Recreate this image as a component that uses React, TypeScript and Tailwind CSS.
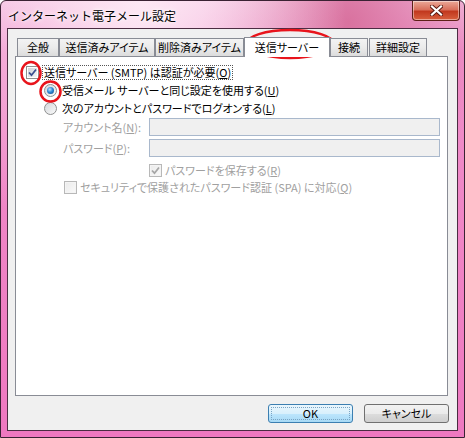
import React from 'react';

const font = "font-['Noto_Sans_CJK_JP','Noto_Sans',sans-serif]";

function Check({ checked, disabled }: { checked?: boolean; disabled?: boolean }) {
  return (
    <span
      className={`flex h-[13px] w-[13px] shrink-0 items-center justify-center border ${
        disabled ? 'border-[#b8b8b8] bg-[#f4f4f4]' : 'border-[#8e8f8f] bg-white'
      }`}
    >
      <span
        className={`flex h-[9px] w-[9px] items-center justify-center ${
          disabled
            ? 'bg-[linear-gradient(135deg,#ececec,#f8f8f8)]'
            : 'bg-[linear-gradient(135deg,#cfd3d8,#f4f5f7)]'
        }`}
      >
        {checked && (
          <svg width="9" height="9" viewBox="0 0 9 9">
            <path
              d="M1 4.5 L3.5 7.2 L8 1.5"
              fill="none"
              stroke={disabled ? '#a6a6a6' : '#3b4f8f'}
              strokeWidth="1.8"
            />
          </svg>
        )}
      </span>
    </span>
  );
}

function Radio({ checked }: { checked?: boolean }) {
  return (
    <span className="flex h-[13px] w-[13px] shrink-0 items-center justify-center rounded-full border border-[#8e8f8f] bg-[linear-gradient(135deg,#d4d7db,#fafafa)]">
      {checked && (
        <span className="h-[7px] w-[7px] rounded-full bg-[radial-gradient(circle_at_40%_35%,#bfe6ff_0%,#2f8ad6_45%,#0a3f7c_100%)]" />
      )}
    </span>
  );
}

const tabs = [
  { label: '全般', w: 'w-[42px]' },
  { label: '送信済みアイテム', w: 'w-[96px]' },
  { label: '削除済みアイテム', w: 'w-[89px]' },
  { label: '送信サーバー', w: 'w-[86px]', active: true },
  { label: '接続', w: 'w-[38px]' },
  { label: '詳細設定', w: 'w-[58px] ml-[1px]' },
];

export default function App() {
  return (
    <div
      className={`relative flex h-[438px] w-[465px] flex-col overflow-hidden rounded-t-[6px] border border-[#3a2233] bg-[radial-gradient(ellipse_at_30%_0%,#fde8f4_0%,transparent_45%),radial-gradient(ellipse_at_75%_5%,#d9729f_0%,transparent_30%),linear-gradient(180deg,#f4bde0_0%,#ef8fca_12%,#ee78c0_100%)] text-[11px] text-black ${font}`}
    >
      {/* title bar */}
      <div className="flex h-[27px] items-center pl-[7px] pt-[2px]">
        <span className="text-[12px] [text-shadow:0_0_6px_#fff,0_0_3px_#fff]">インターネット電子メール設定</span>
      </div>
      <button className="absolute right-[4px] top-0 flex h-[20px] w-[48px] items-center justify-center rounded-b-[4px] border border-t-0 border-[#5e2018] bg-[linear-gradient(180deg,#eba898_0%,#d9705c_45%,#c2391f_55%,#d8603e_100%)] shadow-[inset_0_0_0_1px_rgba(255,255,255,0.45)]">
        <svg width="13" height="11" viewBox="0 0 13 11">
          <path d="M2 1.5 L11 9.5 M11 1.5 L2 9.5" stroke="#5a1a12" strokeWidth="4" strokeLinecap="square" />
          <path d="M2 1.5 L11 9.5 M11 1.5 L2 9.5" stroke="#fff" strokeWidth="2.2" strokeLinecap="square" />
        </svg>
      </button>

      {/* client area */}
      <div className="mx-[6px] mb-[6px] flex flex-1 flex-col border border-[#4b2c42] bg-[#f0f0f0] pl-[7px] pr-[9px] pt-[8px] pb-[7px] [font-feature-settings:'palt']">
        <div className="relative z-10 flex h-[20px] items-end pl-[2px]">
          {tabs.map((t) =>
            t.active ? (
              <div
                key={t.label}
                className={`${t.w} flex h-[20px] items-start justify-center border border-b-0 border-[#898c95] bg-white pt-[1px]`}
              >
                {t.label}
              </div>
            ) : (
              <div
                key={t.label}
                className={`${t.w} mb-[1px] flex h-[18px] items-center justify-center border border-b-0 border-[#898c95] bg-[linear-gradient(180deg,#f3f3f3_0%,#ebebeb_50%,#dcdcdc_100%)]`}
              >
                {t.label}
              </div>
            )
          )}
        </div>

        <div className="-mt-px flex flex-1 flex-col border border-[#898c95] bg-white pl-[10px] pr-[7px] pt-[6px]">
          <div className="flex h-[18px] items-center gap-[3px]">
            <Check checked />
            <span className="border border-dotted border-[#555] px-px leading-[13px]">
              送信サーバー (SMTP) は認証が必要(<u>O</u>)
            </span>
          </div>
          <div className="flex h-[18px] items-center gap-[5px] pl-[18px]">
            <Radio checked />
            <span>
              受信メール サーバーと同じ設定を使用する(<u>U</u>)
            </span>
          </div>
          <div className="flex h-[18px] items-center gap-[5px] pl-[18px]">
            <Radio />
            <span>
              次のアカウントとパスワードでログオンする(<u>L</u>)
            </span>
          </div>

          <div className="mt-[1px] flex flex-col gap-[3px] pl-[37px] text-[#a0a0a0]">
            <div className="flex h-[18px] items-center">
              <span className="w-[86px]">
                アカウント名(<u>N</u>):
              </span>
              <div className="h-[18px] flex-1 border border-[#a9b8cc] bg-[#f0f0f0]" />
            </div>
            <div className="flex h-[18px] items-center">
              <span className="w-[86px]">
                パスワード(<u>P</u>):
              </span>
              <div className="h-[18px] flex-1 border border-[#a9b8cc] bg-[#f0f0f0]" />
            </div>
            <div className="mt-[1px] flex h-[18px] items-center gap-[3px] pl-[86px]">
              <Check checked disabled />
              <span>
                パスワードを保存する(<u>R</u>)
              </span>
            </div>
          </div>
          <div className="flex h-[17px] items-center gap-[3px] pl-[38px] text-[#a0a0a0]">
            <Check disabled />
            <span>
              セキュリティで保護されたパスワード認証 (SPA) に対応(<u>Q</u>)
            </span>
          </div>
        </div>

        <div className="mt-[8px] flex justify-end gap-[11px]">
          <button className="flex h-[19px] w-[85px] items-center justify-center rounded-[3px] border border-[#3c7fb1] bg-[linear-gradient(180deg,#eaf6fd_0%,#d9f0fc_50%,#bee6fd_50%,#a7d9f5_100%)] p-[2px]">
            <span className="flex h-full w-full items-center justify-center border border-dotted border-[#7aa4c4]">OK</span>
          </button>
          <button className="-mr-px flex h-[19px] w-[85px] items-center justify-center rounded-[3px] border border-[#707070] bg-[linear-gradient(180deg,#f2f2f2_0%,#ebebeb_50%,#dddddd_50%,#cfcfcf_100%)]">
            キャンセル
          </button>
        </div>
      </div>

      {/* red annotation marks */}
      <svg className="pointer-events-none absolute left-0 top-0" width="465" height="438">
        <ellipse cx="289" cy="43" rx="44" ry="14" fill="none" stroke="#e8141c" strokeWidth="2.5" />
        <ellipse cx="30" cy="72" rx="9.5" ry="11" fill="none" stroke="#e8141c" strokeWidth="2.5" />
        <ellipse cx="49.5" cy="90.5" rx="10" ry="10" fill="none" stroke="#e8141c" strokeWidth="2.5" />
      </svg>
    </div>
  );
}
